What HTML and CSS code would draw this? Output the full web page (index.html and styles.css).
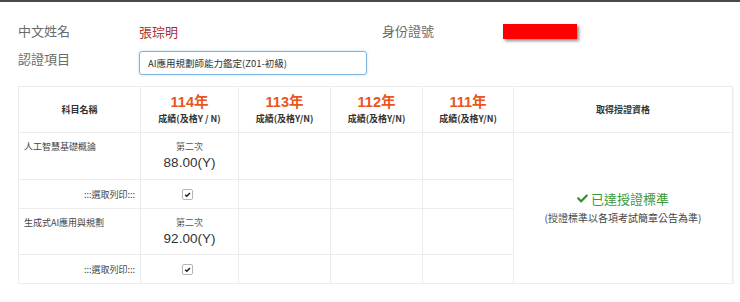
FILE: index.html
```html
<!DOCTYPE html>
<html lang="zh-Hant">
<head>
<meta charset="utf-8">
<title>授證資格查詢</title>
<link rel="stylesheet" href="styles.css">
</head>
<body>
<div class="topbar"></div>
<section class="info">
  <div class="label">中文姓名</div>
  <div class="name">張琮明</div>
  <div class="label">身份證號</div>
  <div class="idcell"><span class="redact"></span></div>

  <div class="label label-top">認證項目</div>
  <div class="selectcell">
    <div class="select">AI應用規劃師能力鑑定(Z01-初級)</div>
  </div>
</section>

<table class="scores">
  <colgroup>
    <col class="c-subj">
    <col class="c-114">
    <col class="c-yr">
    <col class="c-yr">
    <col class="c-111">
    <col class="c-cert">
  </colgroup>
  <thead>
    <tr class="head">
      <th class="th-plain">科目名稱</th>
      <th><div class="year">114年</div><div class="sub">成績(及格Y / N)</div></th>
      <th><div class="year">113年</div><div class="sub">成績(及格Y/N)</div></th>
      <th><div class="year">112年</div><div class="sub">成績(及格Y/N)</div></th>
      <th><div class="year">111年</div><div class="sub">成績(及格Y/N)</div></th>
      <th class="th-plain">取得授證資格</th>
    </tr>
  </thead>
  <tbody>
    <tr class="score-row">
      <td class="subject">人工智慧基礎概論</td>
      <td class="score"><div class="try">第二次</div><div class="val">88.00(Y)</div></td>
      <td></td>
      <td></td>
      <td></td>
      <td class="cert" rowspan="4">
        <div class="pass">
          <svg class="ok" viewBox="0 0 512 512" aria-hidden="true"><path d="M173.9 439.4 7.5 273c-10-10-10-26.2 0-36.2l36.2-36.2c10-10 26.2-10 36.2 0L192 312.7 432.1 72.6c10-10 26.2-10 36.2 0l36.2 36.2c10 10 10 26.2 0 36.2L210.1 439.4c-10 10-26.2 10-36.2 0z"/></svg>已達授證標準
        </div>
        <div class="note">(授證標準以各項考試簡章公告為準)</div>
      </td>
    </tr>
    <tr class="print-row">
      <td class="pick">:::選取列印:::</td>
      <td class="box-cell"><span class="checkbox"><svg viewBox="0 0 10 10" aria-hidden="true"><path d="M2.4 5.2 4.2 7 7.8 3.2"/></svg></span></td>
      <td></td>
      <td></td>
      <td></td>
    </tr>
    <tr class="score-row">
      <td class="subject">生成式AI應用與規劃</td>
      <td class="score"><div class="try">第二次</div><div class="val">92.00(Y)</div></td>
      <td></td>
      <td></td>
      <td></td>
    </tr>
    <tr class="print-row">
      <td class="pick">:::選取列印:::</td>
      <td class="box-cell"><span class="checkbox"><svg viewBox="0 0 10 10" aria-hidden="true"><path d="M2.4 5.2 4.2 7 7.8 3.2"/></svg></span></td>
      <td></td>
      <td></td>
      <td></td>
    </tr>
  </tbody>
</table>
</body>
</html>
```

FILE: styles.css
```css
* { box-sizing: border-box; }

html, body {
  margin: 0;
  background: #fff;
}

body {
  font-family: "Noto Sans CJK TC", "Liberation Sans", sans-serif;
  color: #555;
}

.topbar {
  height: 2px;
  background: #4a4a4a;
}

/* applicant info block */
.info {
  display: grid;
  grid-template-columns: 121px 243px 121px auto;
  grid-template-rows: 28px 24px;
  row-gap: 6px;
  padding: 15px 0 0 18px;
  align-items: center;
}

.label {
  font-size: 13px;
  line-height: 18px;
  color: #6a6a6a;
}

.label-top {
  align-self: start;
  margin-top: -1px;
}

.name {
  font-size: 13px;
  color: #a8312f;
}

.idcell {
  display: flex;
  align-items: center;
}

.redact {
  display: block;
  width: 74px;
  height: 15px;
  background: #ff0000;
  box-shadow: 2px 2px 3px rgba(0, 0, 0, 0.45);
}

.selectcell {
  grid-column: 2 / span 3;
  display: flex;
}

.select {
  width: 228px;
  height: 24px;
  border: 1px solid #7fb3e0;
  border-radius: 3px;
  box-shadow: 0 0 3px rgba(102, 175, 233, 0.45);
  padding: 0 8px;
  font-size: 9.5px;
  line-height: 22px;
  color: #333;
  white-space: nowrap;
}

/* score table */
.scores {
  margin: 11px 0 0 18px;
  width: 714px;
  table-layout: fixed;
  border-collapse: collapse;
  border: 1px solid #e6e6e6;
  box-shadow: 1px 1px 1px rgba(0, 0, 0, 0.04);
}

.c-subj { width: 122px; }
.c-114 { width: 98px; }
.c-yr { width: 92px; }
.c-111 { width: 91px; }
.c-cert { width: 219px; }

.scores th,
.scores td {
  border: 1px solid #ececec;
  padding: 0;
  text-align: center;
  vertical-align: middle;
  color: #444;
}

.head { height: 46px; }

.scores th {
  font-weight: 700;
  font-size: 9px;
  color: #333;
}

.year {
  font-family: "Liberation Sans", "Noto Sans CJK TC", sans-serif;
  font-size: 14.5px;
  line-height: 18px;
  font-weight: 700;
  color: #e8561e;
}

.sub {
  font-size: 9px;
  line-height: 14px;
  margin-top: 1px;
  color: #333;
}

.score-row { height: 47px; }
.score-row + .print-row + .score-row { height: 46px; }
.print-row { height: 29px; }

.score-row td {
  vertical-align: top;
  padding-top: 7px;
}

.subject {
  text-align: left !important;
  padding-left: 5px !important;
  font-size: 9px;
  line-height: 14px;
}

.try {
  font-size: 9px;
  line-height: 14px;
  color: #555;
}

.val {
  font-family: "Liberation Sans", sans-serif;
  font-size: 13.5px;
  line-height: 18px;
  color: #333;
}

.pick {
  text-align: right !important;
  padding-right: 5px !important;
  font-size: 9px;
  color: #555;
}

.box-cell {
  line-height: 0;
  padding-right: 4px !important;
}

.checkbox {
  display: inline-block;
  width: 11px;
  height: 11px;
  border: 1px solid #b5b5b5;
  border-radius: 2px;
  background: #fff;
}

.checkbox svg {
  display: block;
  width: 9px;
  height: 9px;
  fill: none;
  stroke: #222;
  stroke-width: 1.6;
}

.scores td.cert {
  vertical-align: middle;
  padding-top: 0;
  padding-bottom: 2px;
}

.pass {
  display: flex;
  justify-content: center;
  align-items: center;
  gap: 3px;
  font-size: 13px;
  line-height: 18px;
  color: #3a9a3a;
}

.ok {
  width: 11px;
  height: 11px;
  fill: #2f8f2f;
}

.note {
  font-size: 10px;
  line-height: 14px;
  margin-top: 3px;
  color: #444;
}
```
